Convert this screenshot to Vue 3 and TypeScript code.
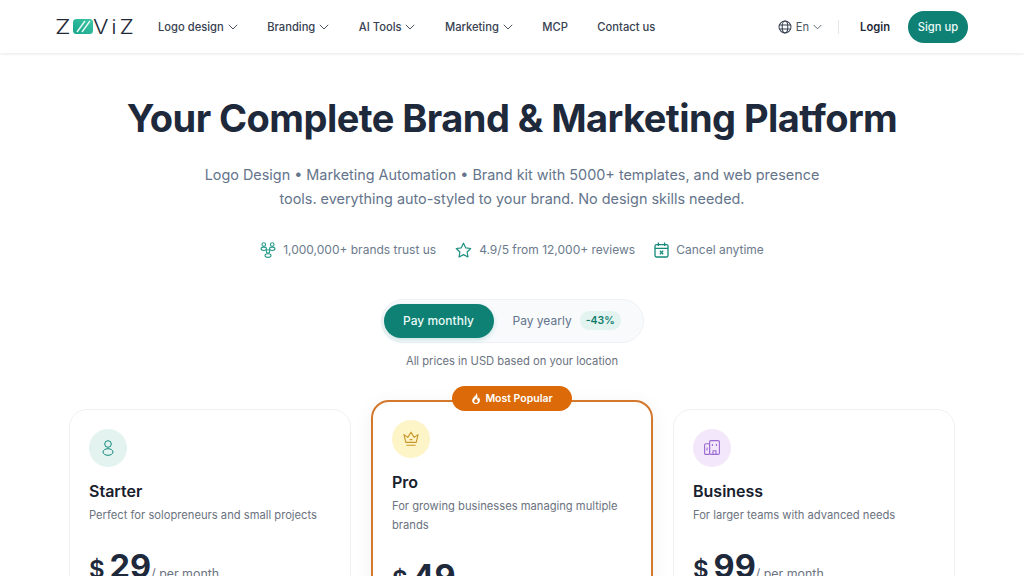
<script setup lang="ts">
const navItems = [
  { label: "Logo design", caret: true },
  { label: "Branding", caret: true },
  { label: "AI Tools", caret: true },
  { label: "Marketing", caret: true },
  { label: "MCP", caret: false },
  { label: "Contact us", caret: false },
];

const plans = [
  { key: "starter", name: "Starter", desc: "Perfect for solopreneurs and small projects", price: "29" },
  { key: "pro", name: "Pro", desc: "For growing businesses managing multiple brands", price: "49" },
  { key: "business", name: "Business", desc: "For larger teams with advanced needs", price: "99" },
];
</script>

<template>
  <div class="page">
    <header class="topbar">
      <div class="logo">
        <span class="logo-z">Z</span>
        <svg class="logo-mark" width="20" height="15" viewBox="0 0 20 15">
          <defs>
            <linearGradient id="logoFill" x1="0" y1="1" x2="1" y2="0">
              <stop offset="0" stop-color="#14a58c" />
              <stop offset="1" stop-color="#3fc7a4" />
            </linearGradient>
          </defs>
          <rect width="20" height="15" rx="3.5" fill="url(#logoFill)" />
          <path d="M4 13 12 2M9 13 17 2" stroke="#e4f7f1" stroke-width="1.5" fill="none" />
        </svg>
        <span class="logo-rest">ViZ</span>
      </div>
      <nav class="nav">
        <a v-for="item in navItems" :key="item.label" class="nav-link">
          {{ item.label }}
          <svg v-if="item.caret" width="10" height="6" viewBox="0 0 10 6" class="caret">
            <path d="M.8.8 5 5l4.2-4.2" fill="none" stroke="currentColor" stroke-width="1" />
          </svg>
        </a>
      </nav>
      <div class="actions">
        <div class="lang">
          <svg width="14" height="14" viewBox="0 0 15 15" fill="none" stroke="#374151" stroke-width="1.1">
            <circle cx="7.5" cy="7.5" r="6.4" />
            <ellipse cx="7.5" cy="7.5" rx="3" ry="6.4" />
            <path d="M1.4 5.4h12.2M1.400 9.600h12.200" />
          </svg>
          <span>En</span>
          <svg width="9" height="6" viewBox="0 0 10 6" class="caret">
            <path d="M.8.8 5 5l4.2-4.2" fill="none" stroke="currentColor" stroke-width="1" />
          </svg>
        </div>
        <span class="divider"></span>
        <a class="login">Login</a>
        <a class="signup">Sign up</a>
      </div>
    </header>

    <main class="content">
      <h1>Your Complete Brand &amp; Marketing Platform</h1>
      <p class="lead">
        Logo Design • Marketing Automation • Brand kit with 5000+ templates, and web presence tools. everything
        auto-styled to your brand. No design skills needed.
      </p>

      <ul class="proof">
        <li>
          <svg width="16" height="16" viewBox="0 0 16 16" fill="none" stroke="#2b9a8c" stroke-width="1.1">
            <circle cx="3.800" cy="2.600" r="1.800" />
            <ellipse cx="3.800" cy="6.800" rx="2.700" ry="1.700" />
            <circle cx="12.200" cy="2.600" r="1.800" />
            <ellipse cx="12.200" cy="6.800" rx="2.700" ry="1.700" />
            <circle cx="8" cy="9.400" r="1.700" />
            <ellipse cx="8" cy="13.600" rx="3" ry="1.800" />
          </svg>
          1,000,000+ brands trust us
        </li>
        <li>
          <svg width="17" height="16" viewBox="0 0 17 16" fill="none" stroke="#1f8f80" stroke-width="1.2" stroke-linejoin="round">
            <path d="M8.500 1.200l2.200 4.600 5 .7-3.600 3.500.9 5-4.500-2.400L4 15l.9-5L1.300 6.500l5-.7z" />
          </svg>
          4.9/5 from 12,000+ reviews
        </li>
        <li>
          <svg width="15" height="16" viewBox="0 0 15 16" fill="none" stroke="#14897a" stroke-width="1.3">
            <rect x="1" y="2.600" width="13" height="12.400" rx="1.600" />
            <path d="M1 6.400h13M4.400.6v3.400M10.600.6v3.400" />
            <path d="M5.800 8.600l3.400 3.600M9.200 8.600l-3.400 3.600" />
          </svg>
          Cancel anytime
        </li>
      </ul>

      <div class="billing">
        <button class="bill-btn active">Pay monthly</button>
        <button class="bill-btn">
          Pay yearly
          <span class="discount">-43%</span>
        </button>
      </div>
      <p class="currency">All prices in USD based on your location</p>

      <section class="plans">
        <article v-for="plan in plans" :key="plan.key" class="plan" :class="plan.key">
          <span v-if="plan.key === 'pro'" class="popular">
            <svg width="10" height="11" viewBox="0 0 10 12">
              <path
                d="M5.400 0c.3 2.200-1.700 3.400-3.200 5.200C.9 6.700.5 8.300 1.100 9.700 1.800 11.100 3.200 12 5 12c1.800 0 3.300-.9 4-2.500.7-1.700.2-3.500-1.100-5-.1 1-.6 1.700-1.300 2.100C6.900 4.200 6.700 1.500 5.400 0zM5 11c-1.100 0-2-.8-2-1.900 0-1 .9-1.700 2-3.100 1.100 1.400 2 2.100 2 3.100C7 10.200 6.100 11 5 11z"
                fill="#fff"
                fill-rule="evenodd"
              />
            </svg>
            Most Popular
          </span>
          <div class="plan-icon">
            <svg v-if="plan.key === 'starter'" width="16" height="18" viewBox="0 0 16 18" fill="none" stroke="#14897a" stroke-width="1">
              <circle cx="8" cy="5" r="3.300" />
              <ellipse cx="8" cy="13" rx="5" ry="3.300" />
            </svg>
            <svg v-else-if="plan.key === 'pro'" width="16" height="16" viewBox="0 0 16 16" fill="none" stroke="#c9962a" stroke-width="1.1" stroke-linejoin="round">
              <path d="M2.800 11.400 1 3.600l3.800 2.800L8 1.200l3.200 5.200L15 3.600l-1.800 7.800z" />
              <path d="M6.600 8.600h2.800M3.400 14.200h9.200" />
            </svg>
            <svg v-else width="16" height="15" viewBox="0 0 16 15" fill="none" stroke="#9b6ad0" stroke-width="1.1" stroke-linejoin="round">
              <rect x="5.600" y=".6" width="9.800" height="13.800" rx="1.200" />
              <rect x=".6" y="3.800" width="5" height="10.600" rx="1.200" />
              <path d="M8.400 4v2M12.400 4v2M3 7.600v3M9 14.400v-3.600h3v3.600" />
            </svg>
          </div>
          <h2>{{ plan.name }}</h2>
          <p class="plan-desc">{{ plan.desc }}</p>
          <div class="price">
            <span class="dollar">$</span>
            <span class="amount">{{ plan.price }}</span>
            <span class="period">/ per month</span>
          </div>
        </article>
      </section>
    </main>
  </div>
</template>

<style>
html,
body {
  margin: 0;
  background: #fff;
}
</style>

<style scoped>
.page {
  height: 576px;
  overflow: hidden;
  font-family: Inter, "Liberation Sans", sans-serif;
  color: #1f2937;
  background: #fff;
}

.topbar {
  height: 53px;
  box-sizing: border-box;
  padding: 0 56px;
  display: flex;
  align-items: center;
  box-shadow: 0 1px 3px rgba(15, 23, 42, 0.1);
}

.logo {
  display: flex;
  align-items: center;
  width: 102px;
  font-size: 20px;
  font-weight: 300;
  color: #1f2937;
}

.logo-z {
  display: inline-block;
  width: 17px;
  margin-left: -1px;
  margin-right: 1px;
  transform: scaleX(1.25);
  transform-origin: left center;
}

.logo-rest {
  display: inline-block;
  letter-spacing: 2.5px;
  transform: scaleX(1.15);
  transform-origin: left center;
}

.logo-mark {
  flex: none;
}

.nav {
  display: flex;
  gap: 29.45px;
  font-size: 11.2px;
  font-weight: 500;
  color: #374151;
}

.nav-link {
  display: flex;
  align-items: center;
  gap: 4px;
  white-space: nowrap;
}

.caret {
  color: #4b5563;
}

.actions {
  margin-left: auto;
  display: flex;
  align-items: center;
  font-size: 11.2px;
}

.lang {
  display: flex;
  align-items: center;
  gap: 4px;
  color: #4b5563;
}

.divider {
  width: 1px;
  height: 14px;
  background: #e5e7eb;
  margin: 0 21px 0 16px;
}

.login {
  font-weight: 600;
  color: #1f2937;
  margin-right: 18px;
}

.signup {
  background: #0e8074;
  color: #e8fbf7;
  font-weight: 500;
  height: 32px;
  width: 60px;
  border-radius: 16px;
  display: flex;
  align-items: center;
  justify-content: center;
}

.content {
  display: flex;
  flex-direction: column;
  align-items: center;
  padding: 0 69px;
}

h1 {
  margin: 42px 0 0;
  font-size: 38px;
  line-height: 46px;
  font-weight: 700;
  letter-spacing: -0.55px;
  color: #1e293b;
  white-space: nowrap;
}

.lead {
  margin: 22px 0 0;
  width: 630px;
  text-align: center;
  font-size: 14.4px;
  line-height: 23.8px;
  color: #64748b;
}

.proof {
  list-style: none;
  margin: 30px 0 0;
  padding: 0;
  display: flex;
  gap: 19px;
  font-size: 12px;
  color: #6b7a8c;
}

.proof li {
  display: flex;
  align-items: center;
  gap: 7px;
  height: 18px;
}

.billing {
  margin-top: 40px;
  display: flex;
  align-items: center;
  gap: 3px;
  height: 44px;
  box-sizing: border-box;
  width: 263px;
  padding: 0 2px;
  border: 1px solid #eef2f6;
  border-radius: 22px;
  background: #f8fafc;
}

.bill-btn {
  border: 0;
  background: none;
  font: inherit;
  font-size: 12px;
  color: #64748b;
  height: 34px;
  padding: 0 16px;
  border-radius: 17px;
  display: flex;
  flex: none;
  align-items: center;
  gap: 8px;
  white-space: nowrap;
}

.bill-btn.active {
  background: #0e8074;
  color: #e8fbf7;
  font-weight: 500;
  width: 110px;
  justify-content: center;
  padding: 0;
  box-shadow: 0 2px 5px rgba(15, 130, 118, 0.2);
}

.discount {
  background: #e3f3f0;
  color: #0f7b6c;
  font-size: 10.5px;
  font-weight: 600;
  border-radius: 9px;
  padding: 3px 6px;
}

.currency {
  margin: 11px 0 0;
  font-size: 11.2px;
  line-height: 14px;
  color: #6b7280;
}

.plans {
  margin-top: 18px;
  width: 886px;
  display: grid;
  grid-template-columns: repeat(3, 282px);
  gap: 20px;
  align-items: start;
}

.plan {
  position: relative;
  margin-top: 23px;
  box-sizing: border-box;
  height: 300px;
  padding: 19px;
  border: 1px solid #eef0f3;
  border-radius: 18px;
  background: #fff;
}

.plan.pro {
  margin-top: 14px;
  border: 2px solid #d4782c;
  padding: 18px 19px;
  box-shadow: 0 4px 20px rgba(15, 23, 42, 0.06);
}

.popular {
  position: absolute;
  top: -16px;
  left: 50%;
  transform: translateX(-50%);
  height: 25px;
  width: 120px;
  border-radius: 13px;
  background: #dc6a08;
  color: #fff;
  font-size: 10.5px;
  font-weight: 600;
  display: flex;
  align-items: center;
  justify-content: center;
  gap: 4px;
}

.plan-icon {
  width: 38px;
  height: 38px;
  border-radius: 50%;
  background: #e3f3f0;
  display: flex;
  align-items: center;
  justify-content: center;
}

.pro .plan-icon {
  background: #fdf4c7;
}

.business .plan-icon {
  background: #f3e8fb;
}

h2 {
  margin: 12px 0 0;
  font-size: 16px;
  line-height: 24px;
  font-weight: 600;
  color: #17202c;
}

.plan-desc {
  margin: 3px 0 0;
  font-size: 11.2px;
  line-height: 19px;
  color: #6b7280;
}

.price {
  margin-top: 22px;
  display: flex;
  align-items: baseline;
  color: #1e293b;
}

.dollar {
  font-size: 24px;
  font-weight: 600;
  margin-right: 5px;
}

.amount {
  font-size: 32.5px;
  font-weight: 700;
}

.period {
  font-size: 12.4px;
  color: #6b7280;
}
</style>
